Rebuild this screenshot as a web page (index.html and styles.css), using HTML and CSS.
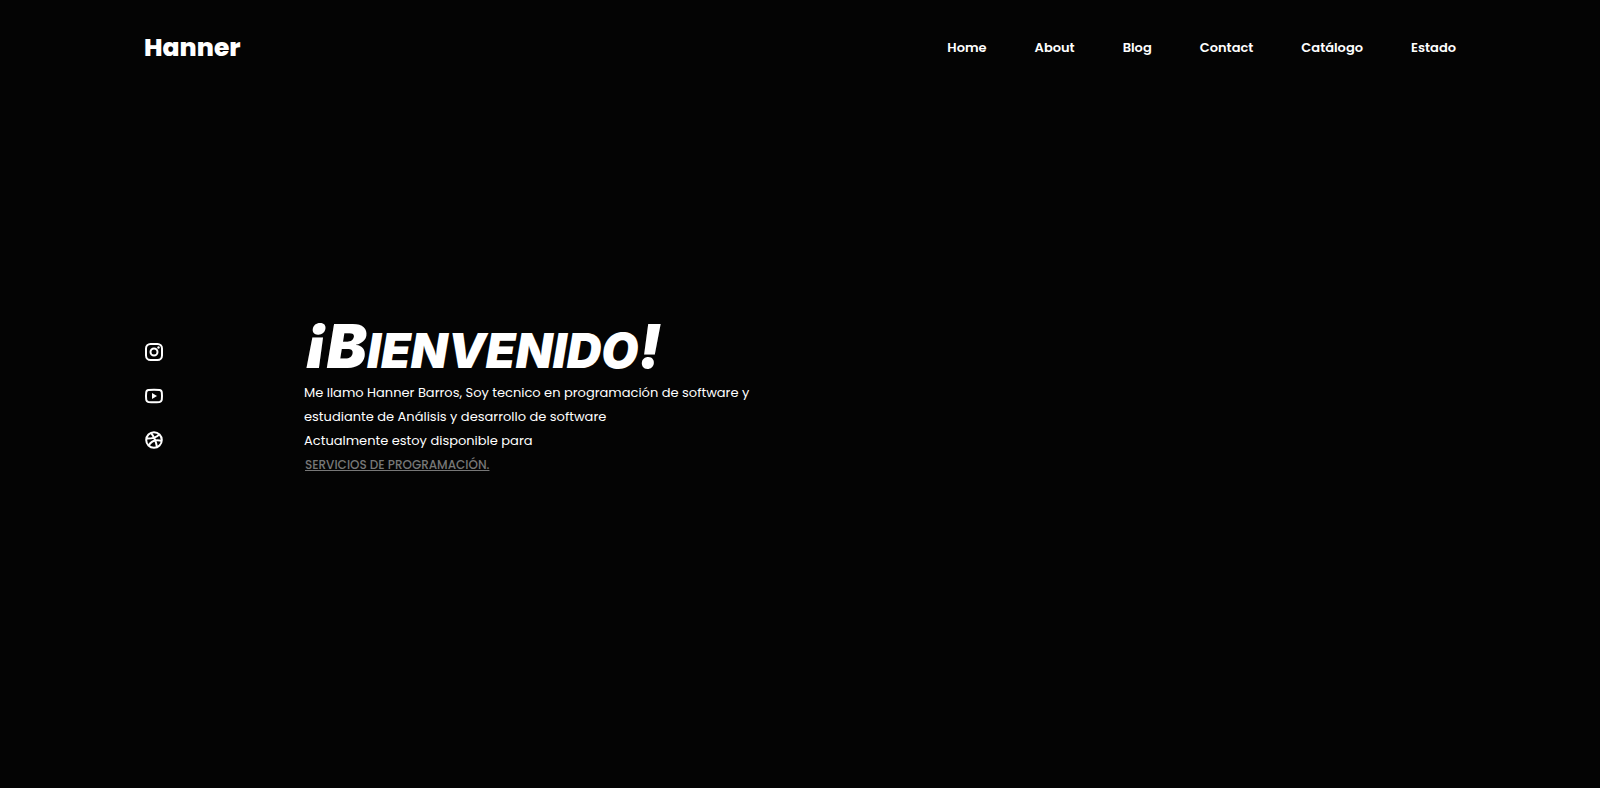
FILE: index.html
```html
<!DOCTYPE html>
<html lang="es">
<head>
<meta charset="utf-8">
<meta name="viewport" content="width=device-width, initial-scale=1">
<title>Hanner</title>
<link rel="stylesheet" href="styles.css">
</head>
<body>
<header class="header">
  <a class="logo" href="#">Hanner</a>
  <nav class="nav">
    <a href="#home">Home</a>
    <a href="#about">About</a>
    <a href="#blog">Blog</a>
    <a href="#contact">Contact</a>
    <a href="#catalogo">Catálogo</a>
    <a href="#estado">Estado</a>
  </nav>
</header>
<main class="hero" id="home">
  <div class="social">
    <a href="#instagram" aria-label="Instagram">
      <svg viewBox="0 0 20 20" fill="none" stroke="currentColor" stroke-width="2"><rect x="2" y="2" width="16" height="16" rx="4.5"/><circle cx="10" cy="10" r="3.5"/><circle cx="14.5" cy="5.5" r="1.2" fill="currentColor" stroke="none"/></svg>
    </a>
    <a href="#youtube" aria-label="YouTube">
      <svg viewBox="0 0 20 20" fill="none" stroke="currentColor" stroke-width="2"><path d="M4.5 4Q10 3.4 15.5 4Q17.6 4.3 17.8 6.5Q18.2 10 17.8 13.5Q17.6 15.7 15.5 16Q10 16.6 4.5 16Q2.4 15.7 2.2 13.5Q1.8 10 2.2 6.5Q2.4 4.3 4.5 4Z"/><path d="M8 7l5 3-5 3z" fill="currentColor" stroke="none"/></svg>
    </a>
    <a href="#dribbble" aria-label="Dribbble">
      <svg viewBox="0 0 20 20" fill="none" stroke="currentColor" stroke-width="2"><circle cx="10" cy="10" r="7.8"/><path d="M7 2.8C10 6.5 12 11 13 17.2M2.2 8.6C8 8.7 12.5 7.5 15.3 4.3M4.7 15.5C7 11 12 9.3 17.8 10.7"/></svg>
    </a>
  </div>
  <section class="intro">
    <h1 class="title"><span class="tall">¡B</span>IENVENIDO<span class="tall">!</span></h1>
    <p class="text">Me llamo Hanner Barros, Soy tecnico en programación de software y<br>estudiante de Análisis y desarrollo de software<br>Actualmente estoy disponible para</p>
    <a class="services" href="#servicios">SERVICIOS DE PROGRAMACIÓN.</a>
  </section>
</main>
</body>
</html>
```
FILE: styles.css
```css
* {
  box-sizing: border-box;
  margin: 0;
  padding: 0;
}

body {
  min-height: 100vh;
  display: flex;
  flex-direction: column;
  background: #040404;
  color: #fff;
  font-family: Poppins, Inter, sans-serif;
}

a {
  color: inherit;
  text-decoration: none;
}

.header {
  display: flex;
  align-items: center;
  justify-content: space-between;
  padding: 28px 9%;
}

.logo {
  font-size: 25px;
  line-height: 40px;
  font-weight: 800;
}

.nav {
  display: flex;
  gap: 48px;
  font-size: 13px;
  font-weight: 600;
}

.hero {
  flex: 1;
  display: flex;
  align-items: center;
  gap: 140px;
  padding: 0 9% 92px;
}

.social {
  display: flex;
  flex-direction: column;
  gap: 24px;
}

.social a,
.social svg {
  display: block;
  width: 20px;
  height: 20px;
}

.intro {
  display: flex;
  flex-direction: column;
  align-items: flex-start;
}

.title {
  font-family: "Permanent Marker", Inter, sans-serif;
  font-size: 48px;
  line-height: 60px;
  font-weight: 900;
  font-style: italic;
  font-feature-settings: "case";
}

.tall {
  font-size: 60px;
}

.text {
  font-size: 13px;
  line-height: 24px;
}

.services {
  padding-left: 1px;
  color: #777;
  font-size: 12px;
  line-height: 24px;
  font-weight: 500;
  text-decoration: underline;
}
```
